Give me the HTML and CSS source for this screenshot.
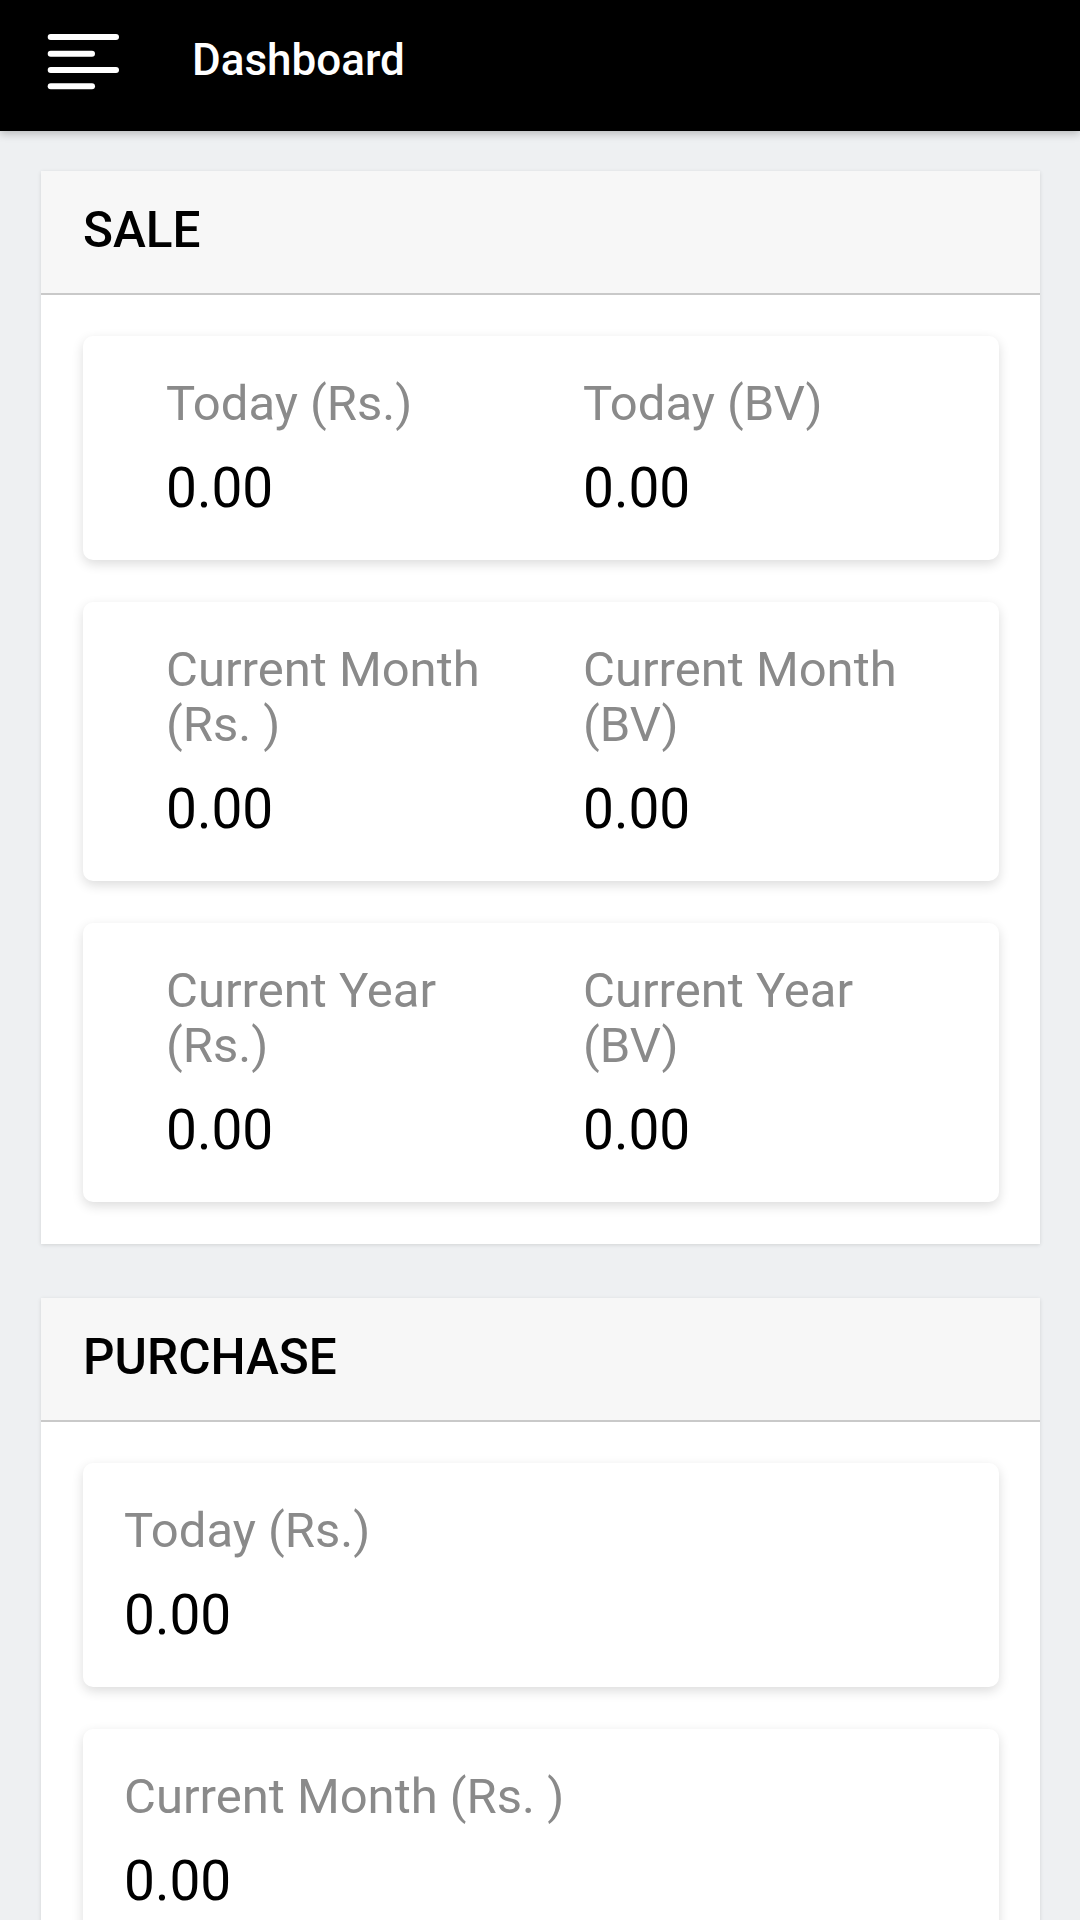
FILE: index.html
```html
<!DOCTYPE html>
<html lang="en">
<head>
<meta charset="utf-8">
<title>Dashboard</title>
<link rel="stylesheet" href="styles.css">
</head>
<body>
<header class="appbar">
  <svg class="menu-icon" width="78" height="60" viewBox="0 0 78 60" aria-hidden="true">
    <g stroke="#fff" stroke-width="6" stroke-linecap="round">
      <line x1="6.7" y1="5" x2="72" y2="5"/>
      <line x1="6.7" y1="21.7" x2="48" y2="21.7"/>
      <line x1="6.7" y1="38" x2="72" y2="38"/>
      <line x1="6.7" y1="54.3" x2="48" y2="54.3"/>
    </g>
  </svg>
  <h1 class="appbar-title">Dashboard</h1>
</header>

<main class="content">
  <section class="panel">
    <h2 class="panel-title">SALE</h2>
    <div class="panel-body">
      <div class="stat-card two-col">
        <div class="stat"><div class="stat-label">Today (Rs.)</div><div class="stat-value">0.00</div></div>
        <div class="stat"><div class="stat-label">Today (BV)</div><div class="stat-value">0.00</div></div>
      </div>
      <div class="stat-card two-col">
        <div class="stat"><div class="stat-label">Current Month (Rs. )</div><div class="stat-value">0.00</div></div>
        <div class="stat"><div class="stat-label">Current Month (BV)</div><div class="stat-value">0.00</div></div>
      </div>
      <div class="stat-card two-col">
        <div class="stat"><div class="stat-label">Current Year (Rs.)</div><div class="stat-value">0.00</div></div>
        <div class="stat"><div class="stat-label">Current Year (BV)</div><div class="stat-value">0.00</div></div>
      </div>
    </div>
  </section>

  <section class="panel">
    <h2 class="panel-title">PURCHASE</h2>
    <div class="panel-body">
      <div class="stat-card">
        <div class="stat-label">Today (Rs.)</div><div class="stat-value">0.00</div>
      </div>
      <div class="stat-card">
        <div class="stat-label">Current Month (Rs. )</div><div class="stat-value">0.00</div>
      </div>
      <div class="stat-card">
        <div class="stat-label">Current Year (Rs.)</div><div class="stat-value">0.00</div>
      </div>
    </div>
  </section>
</main>
</body>
</html>
```

FILE: styles.css
```css
* {
  box-sizing: border-box;
}

html, body {
  margin: 0;
  padding: 0;
}

body {
  background: #eef0f2;
  font-family: Roboto, "Noto Sans", "Liberation Sans", sans-serif;
  color: #000;
}

.appbar {
  position: relative;
  z-index: 2;
  height: 131px;
  background: #000;
  display: flex;
  align-items: flex-start;
  padding-left: 44px;
  box-shadow: 0 3px 8px rgba(0, 0, 0, 0.22);
}

.menu-icon {
  display: block;
  margin-top: 32px;
  flex: none;
}

.appbar-title {
  margin: 38px 0 0 70px;
  font-size: 44px;
  line-height: 44px;
  font-weight: 500;
  color: #fff;
}

.content {
  padding-top: 40px;
}

.panel {
  margin: 0 40px 54px 41px;
  background: #fff;
  box-shadow: 0 1px 4px rgba(0, 0, 0, 0.12);
}

.panel-title {
  margin: 0;
  padding: 0 42px 4px;
  background: #f7f7f7;
  border-bottom: 2px solid #c9c9c9;
  font-size: 49.5px;
  line-height: 118px;
  font-weight: 500;
  color: #000;
}

.panel-body {
  padding: 41px 41px 42px 42px;
  display: flex;
  flex-direction: column;
  gap: 42px;
}

.stat-card {
  background: #fff;
  border-radius: 10px;
  box-shadow: 0 4px 12px rgba(0, 0, 0, 0.14);
  padding: 40px 41px 41px;
}

.two-col {
  display: grid;
  grid-template-columns: 1fr 1fr;
}

.two-col .stat {
  padding-left: 42px;
}

.stat-label {
  font-size: 49px;
  line-height: 55px;
  color: #8a8a8a;
}

.stat-value {
  margin-top: 26px;
  font-size: 55px;
  line-height: 62px;
  color: #000;
}
```
